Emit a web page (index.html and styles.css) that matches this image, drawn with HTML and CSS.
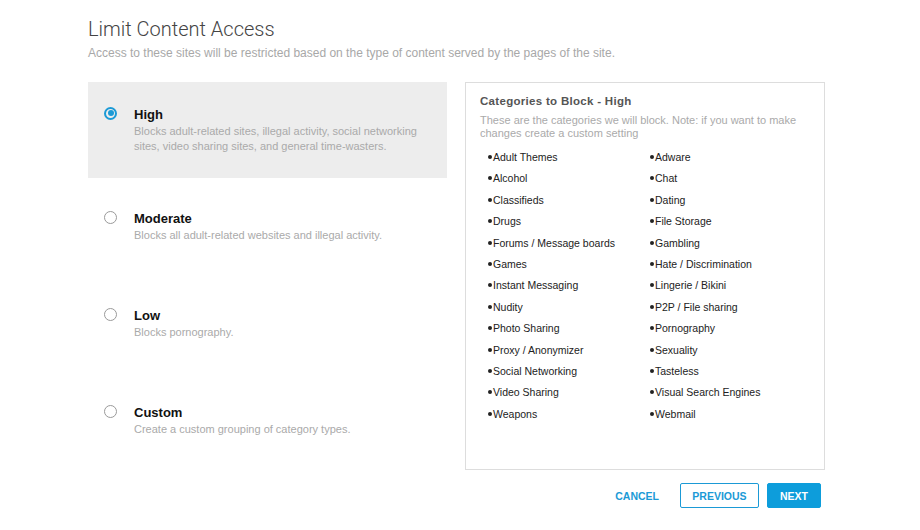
FILE: index.html
```html
<!DOCTYPE html>
<html lang="en">
<head>
<meta charset="UTF-8">
<title>Limit Content Access</title>
<link rel="stylesheet" href="styles.css">
</head>
<body>
<div class="page">
    <h1>Limit Content Access</h1>
    <p class="lead">Access to these sites will be restricted based on the type of content served by the pages of the site.</p>

    <div class="columns">
        <div class="levels">
            <div class="option selected">
                <span class="radio"></span>
                <div class="option-text">
                    <div class="option-name">High</div>
                    <div class="option-desc">Blocks adult-related sites, illegal activity, social networking sites, video sharing sites, and general time-wasters.</div>
                </div>
            </div>
            <div class="option">
                <span class="radio"></span>
                <div class="option-text">
                    <div class="option-name">Moderate</div>
                    <div class="option-desc">Blocks all adult-related websites and illegal activity.</div>
                </div>
            </div>
            <div class="option">
                <span class="radio"></span>
                <div class="option-text">
                    <div class="option-name">Low</div>
                    <div class="option-desc">Blocks pornography.</div>
                </div>
            </div>
            <div class="option">
                <span class="radio"></span>
                <div class="option-text">
                    <div class="option-name">Custom</div>
                    <div class="option-desc">Create a custom grouping of category types.</div>
                </div>
            </div>
        </div>

        <div class="categories">
            <h2>Categories to Block - High</h2>
            <p class="note">These are the categories we will block. Note: if you want to make changes create a custom setting</p>
            <ul class="cat-list">
                <li>Adult Themes</li>
                <li>Adware</li>
                <li>Alcohol</li>
                <li>Chat</li>
                <li>Classifieds</li>
                <li>Dating</li>
                <li>Drugs</li>
                <li>File Storage</li>
                <li>Forums / Message boards</li>
                <li>Gambling</li>
                <li>Games</li>
                <li>Hate / Discrimination</li>
                <li>Instant Messaging</li>
                <li>Lingerie / Bikini</li>
                <li>Nudity</li>
                <li>P2P / File sharing</li>
                <li>Photo Sharing</li>
                <li>Pornography</li>
                <li>Proxy / Anonymizer</li>
                <li>Sexuality</li>
                <li>Social Networking</li>
                <li>Tasteless</li>
                <li>Video Sharing</li>
                <li>Visual Search Engines</li>
                <li>Weapons</li>
                <li>Webmail</li>
            </ul>
        </div>
    </div>

    <div class="actions">
        <button class="btn-link">CANCEL</button>
        <button class="btn-outline">PREVIOUS</button>
        <button class="btn-primary">NEXT</button>
    </div>
</div>
</body>
</html>
```

FILE: styles.css
```css
body {
  font-family: 'Liberation Sans', Arial, sans-serif;
  background-color: #fff;
  color: #222;
  margin: 0;
}

.page {
  width: 737px;
  margin-left: 88px;
  padding-top: 15px;
}

h1 {
  font-family: Roboto, 'Liberation Sans', sans-serif;
  font-weight: 300;
  font-size: 20px;
  color: #444;
  margin: 0;
  line-height: 28px;
}

.lead {
  font-size: 12px;
  color: #a8a8a8;
  margin: 2px 0 0;
  line-height: 16px;
}

.columns {
  display: flex;
  justify-content: space-between;
  margin-top: 21px;
}

.levels {
  width: 359px;
}

.option {
  display: flex;
  align-items: center;
  height: 97px;
  padding: 0 16px;
  box-sizing: border-box;
}

.option.selected {
  height: 96px;
  background-color: #ededed;
}

.option-text {
  margin-left: 17px;
}

.radio {
  width: 11px;
  height: 11px;
  border: 1px solid #9a9a9a;
  border-radius: 50%;
  flex-shrink: 0;
  position: relative;
  margin-top: -19px;
}

.option.selected .radio {
  border: 2px solid #1b9ad6;
  width: 9px;
  height: 9px;
  margin-top: -34px;
}

.option.selected .radio::after {
  content: '';
  position: absolute;
  left: 1.5px;
  top: 1.5px;
  width: 6px;
  height: 6px;
  border-radius: 50%;
  background-color: #1b9ad6;
}

.option-name {
  font-weight: bold;
  font-size: 13px;
  color: #111;
  line-height: 16px;
}

.option-desc {
  font-size: 11px;
  color: #aaa;
  line-height: 15px;
  margin-top: 1px;
}

.categories {
  width: 360px;
  height: 388px;
  box-sizing: border-box;
  border: 1px solid #ddd;
  padding: 10px 14px;
}

h2 {
  font-size: 11.5px;
  font-weight: bold;
  color: #555;
  letter-spacing: 0.3px;
  margin: 0;
  line-height: 16px;
}

.note {
  font-size: 11px;
  color: #aaa;
  line-height: 13px;
  margin: 5px 0 0;
}

.cat-list {
  list-style: none;
  margin: 7px 0 0;
  padding: 0 0 0 8px;
  display: grid;
  grid-template-columns: 162px 1fr;
}

.cat-list li {
  font-size: 10.5px;
  line-height: 21.4px;
  color: #222;
}

.cat-list li::before {
  content: '';
  display: inline-block;
  width: 4px;
  height: 4px;
  border-radius: 50%;
  background-color: #222;
  margin-right: 1px;
  vertical-align: 2px;
}

.actions {
  display: flex;
  justify-content: flex-end;
  align-items: center;
  margin-top: 13px;
  padding-right: 4px;
}

button {
  font-family: 'Liberation Sans', Arial, sans-serif;
  font-weight: bold;
  font-size: 10.5px;
  height: 25px;
  border-radius: 2px;
  cursor: pointer;
}

.btn-link {
  background: none;
  border: none;
  color: #1b9ad6;
  padding: 0;
  margin-right: 21px;
}

.btn-outline {
  background: #fff;
  border: 1px solid #1b9ad6;
  color: #1b9ad6;
  width: 79px;
}

.btn-primary {
  background-color: #0d9ddb;
  border: 1px solid #0d9ddb;
  color: #fff;
  width: 54px;
  margin-left: 8px;
}
```
